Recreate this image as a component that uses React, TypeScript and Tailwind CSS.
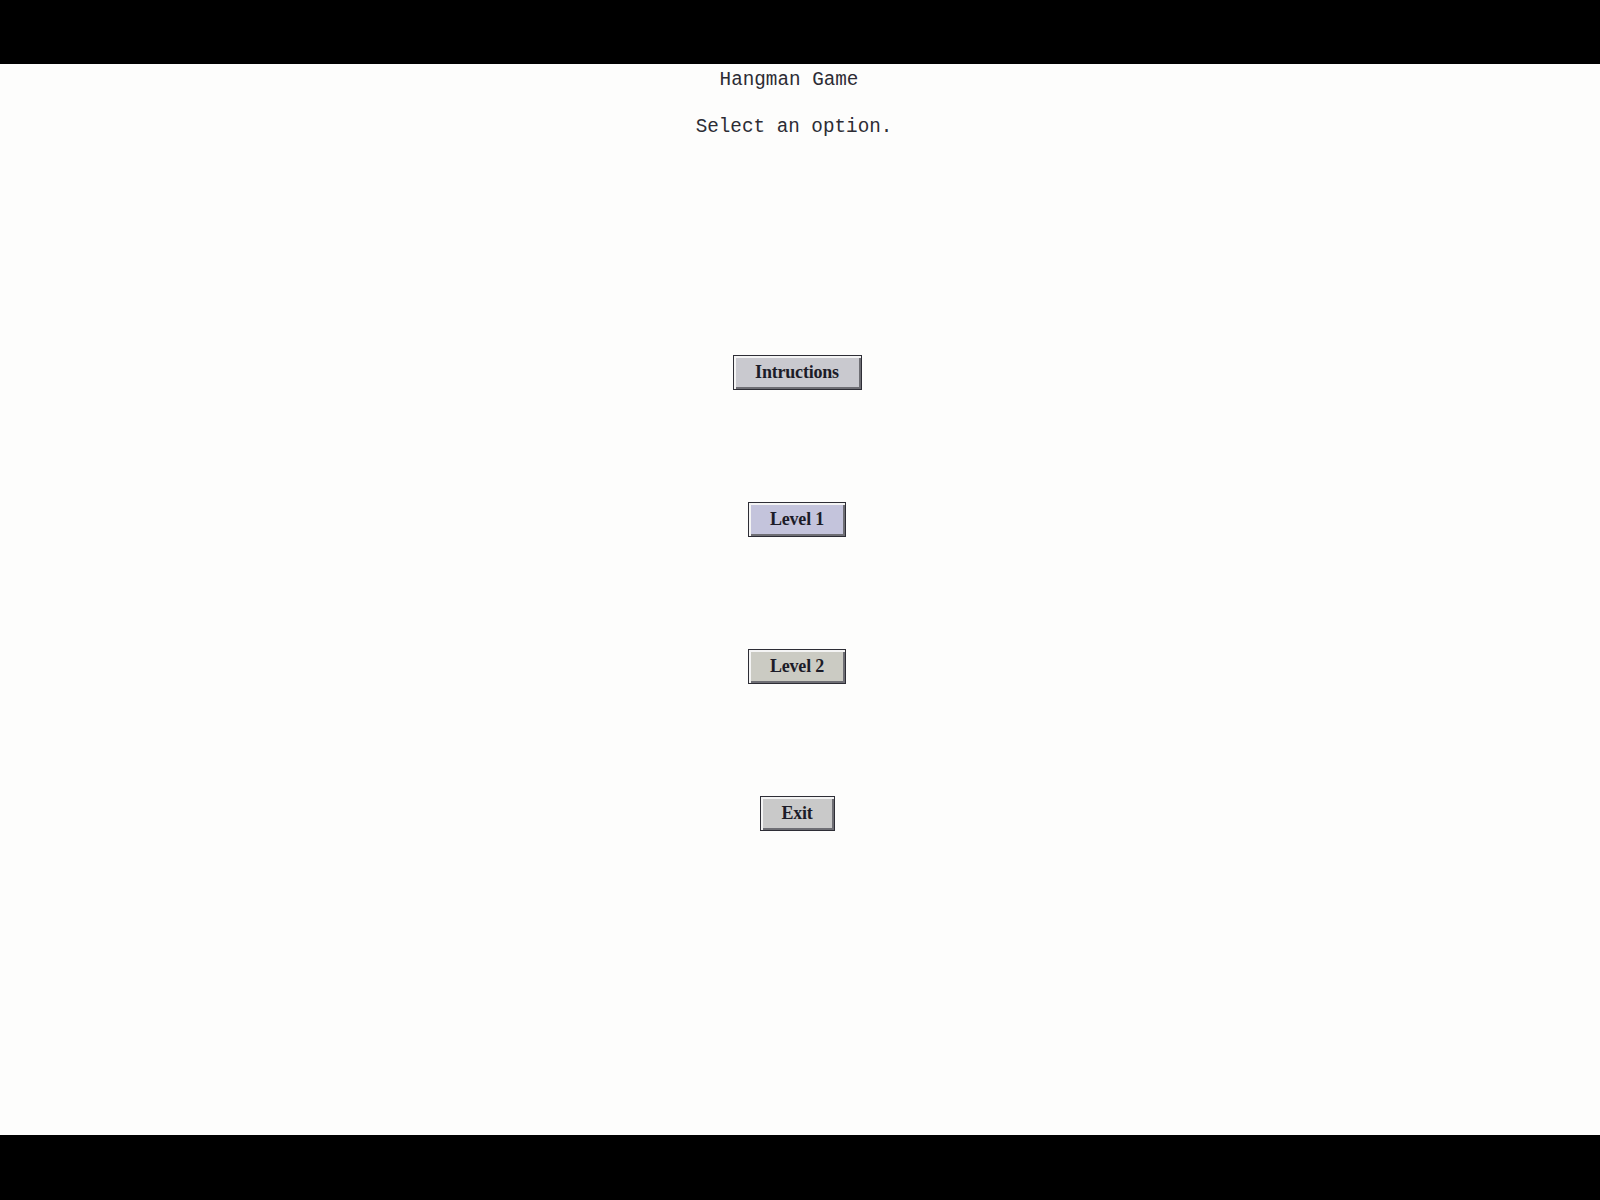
const OPTIONS = [
  { label: "Intructions", width: "w-[129px]", bg: "bg-[#c9c9cf]" },
  { label: "Level 1", width: "w-[98px]", bg: "bg-[#c4c4dc]" },
  { label: "Level 2", width: "w-[98px]", bg: "bg-[#cbcbc3]" },
  { label: "Exit", width: "w-[75px]", bg: "bg-[#c9c9c9]" },
];

export default function App() {
  return (
    <div className="flex h-[1200px] w-[1600px] flex-col bg-black">
      <div className="h-[64px] shrink-0" />
      <main className="flex h-[1071px] shrink-0 flex-col items-center bg-[#fdfdfc] pr-[6px] pt-[5px]">
        <p className="mr-[16px] font-['Liberation_Mono','Courier_New',monospace] text-[19.3px] leading-[22px] text-[#2c2c34]">
          Hangman Game
        </p>
        <p className="mr-[6px] mt-[25px] font-['Liberation_Mono','Courier_New',monospace] text-[19.3px] leading-[22px] text-[#2c2c34]">
          Select an option.
        </p>

        {/* Menu buttons */}
        <div className="mt-[217px] flex flex-col items-center gap-[112px]">
          {OPTIONS.map((o) => (
            <button
              key={o.label}
              className={`${o.width} ${o.bg} flex h-[35px] items-center justify-center border border-[#2e2e36] font-['Liberation_Serif','Times_New_Roman',serif] text-[18px] font-bold tracking-[-0.2px] text-[#1c1c28] shadow-[inset_2px_2px_0_#f4f4f4,inset_-2px_-2px_0_#6e6e74]`}
            >
              {o.label}
            </button>
          ))}
        </div>
      </main>
      <div className="flex-1" />
    </div>
  );
}
